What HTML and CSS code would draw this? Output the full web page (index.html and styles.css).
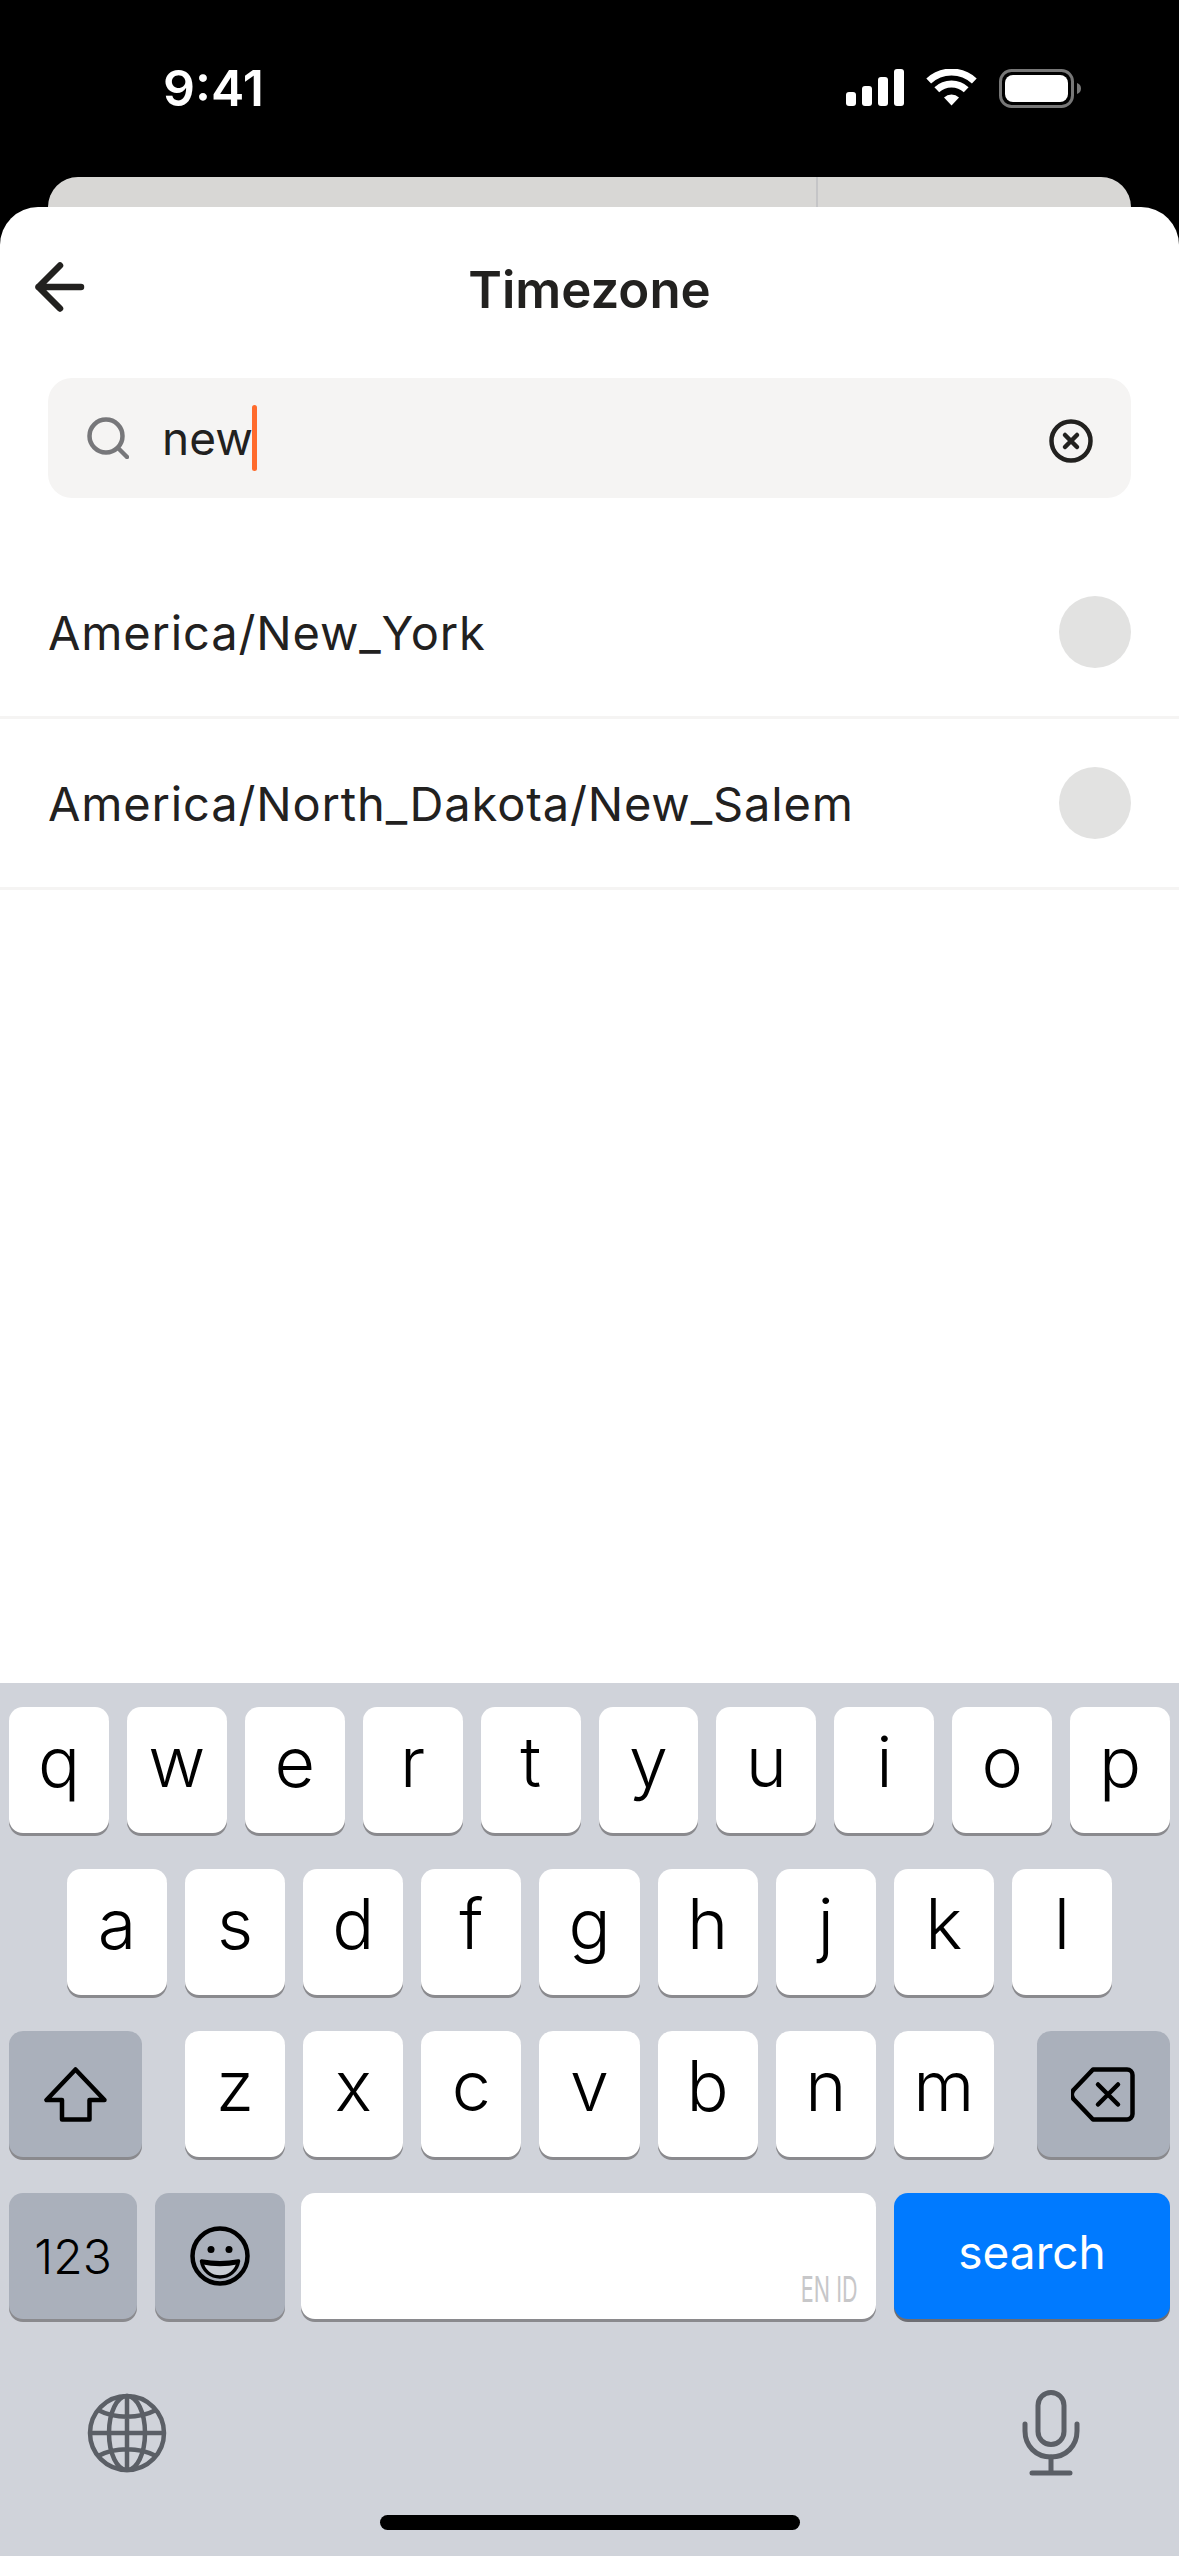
FILE: index.html
```html
<!DOCTYPE html>
<html lang="en">
  <head>
    <meta charset="UTF-8" />
    <meta name="viewport" content="width=device-width, initial-scale=1.0" />
    <title>Timezone</title>
    <link rel="stylesheet" href="styles.css">
  </head>
  <body>
    <div class="status-bar">
      <span class="time">9:41</span>
      <div class="status-icons">
        <svg class="signal" width="58" height="37" viewBox="0 0 58 37" fill="#fff">
          <rect x="0" y="23" width="10" height="14" rx="3"/>
          <rect x="16" y="17" width="10" height="20" rx="3"/>
          <rect x="32" y="8" width="10" height="29" rx="3"/>
          <rect x="48" y="0" width="10" height="37" rx="3"/>
        </svg>
        <svg class="wifi" width="51" height="37" viewBox="0 0 51 37" fill="none" stroke="#fff" stroke-width="7">
          <path d="M2.7 12A33.5 33.5 0 0 1 48.3 12"/>
          <path d="M10.8 20.8A21.5 21.5 0 0 1 40.2 20.8"/>
          <path d="M25.5 36.5L18 28.5A11 11 0 0 1 33 28.5Z" fill="#fff" stroke="none"/>
        </svg>
        <svg class="battery" width="82" height="39" viewBox="0 0 82 39">
          <rect x="1.5" y="1.5" width="72" height="36" rx="11" fill="none" stroke="#777" stroke-width="3"/>
          <rect x="6" y="6" width="63" height="27" rx="8" fill="#fff"/>
          <path d="M78 14C81 15 82 17 82 19.5C82 22 81 24 78 25Z" fill="#777"/>
        </svg>
      </div>
    </div>

    <div class="back-card">
      <div class="back-card-left"></div>
      <div class="back-card-right"></div>
    </div>

    <div class="sheet">
      <div class="sheet-header">
        <svg class="back-arrow" width="50" height="52" viewBox="0 0 50 52" fill="none" stroke="#22211f" stroke-width="6.5" stroke-linecap="round" stroke-linejoin="round">
          <path d="M46 26H3.500M25 4.500L3.500 26L25 47.500"/>
        </svg>
        <h2>Timezone</h2>
      </div>

      <div class="search-box">
        <svg class="search-icon" width="42" height="42" viewBox="0 0 42 42" fill="none" stroke="#77777a" stroke-width="4.500" stroke-linecap="round">
          <circle cx="19" cy="19" r="16.500"/>
          <path d="M32 32L40 40"/>
        </svg>
        <span class="search-text">new</span>
        <span class="caret"></span>
        <svg class="clear-icon" width="44" height="44" viewBox="0 0 44 44" fill="none" stroke="#22211f" stroke-width="4.500" stroke-linecap="round">
          <circle cx="22" cy="22" r="19.500"/>
          <path d="M16 16L28 28M28 16L16 28"/>
        </svg>
      </div>

      <div class="tz-list">
        <div class="tz-row">
          <span>America/New_York</span>
          <span class="radio"></span>
        </div>
        <div class="tz-row">
          <span>America/North_Dakota/New_Salem</span>
          <span class="radio"></span>
        </div>
      </div>
    </div>

    <div class="keyboard">
      <div class="kb-row kb-row-1">
        <div class="key">q</div>
        <div class="key">w</div>
        <div class="key">e</div>
        <div class="key">r</div>
        <div class="key">t</div>
        <div class="key">y</div>
        <div class="key">u</div>
        <div class="key">i</div>
        <div class="key">o</div>
        <div class="key">p</div>
      </div>
      <div class="kb-row kb-row-2">
        <div class="key">a</div>
        <div class="key">s</div>
        <div class="key">d</div>
        <div class="key">f</div>
        <div class="key">g</div>
        <div class="key">h</div>
        <div class="key">j</div>
        <div class="key">k</div>
        <div class="key">l</div>
      </div>
      <div class="kb-row kb-row-3">
        <div class="key key-dark key-shift">
          <svg width="63" height="55" viewBox="0 0 63 55" fill="none" stroke="#000" stroke-width="4.500" stroke-linejoin="round">
            <path d="M31.500 2.500L2.500 33H18V52.500H45.500V33H60.500Z"/>
          </svg>
        </div>
        <div class="key">z</div>
        <div class="key">x</div>
        <div class="key">c</div>
        <div class="key">v</div>
        <div class="key">b</div>
        <div class="key">n</div>
        <div class="key">m</div>
        <div class="key key-dark key-delete">
          <svg width="64" height="55" viewBox="0 0 64 55" fill="none" stroke="#000" stroke-width="4.500" stroke-linejoin="round" stroke-linecap="round">
            <path d="M22 2.500H56A5.500 5.500 0 0 1 61.500 8V47A5.500 5.500 0 0 1 56 52.500H22L2.500 32Q-1 27.500 2.500 23Z"/>
            <path d="M27 17.500L47 37.500M47 17.500L27 37.500"/>
          </svg>
        </div>
      </div>
      <div class="kb-row kb-row-4">
        <div class="key key-dark key-num">123</div>
        <div class="key key-dark key-emoji">
          <svg width="60" height="60" viewBox="0 0 60 60" fill="none" stroke="#000" stroke-width="4.500">
            <circle cx="30" cy="30" r="27.500"/>
            <circle cx="21" cy="23.500" r="3.500" fill="#000" stroke="none"/>
            <circle cx="39" cy="23.500" r="3.500" fill="#000" stroke="none"/>
            <path d="M11.500 35C24 37.500 36 37.500 48.500 35C47 45 39 51 30 51C21 51 13 45 11.500 35Z" fill="#c9cdd4" stroke-width="3.500" stroke-linejoin="round"/>
            <path d="M12 36.500C24 39 36 39 48 36.500" stroke-width="3.500"/>
          </svg>
        </div>
        <div class="key key-space"><span class="lang-label">EN ID</span></div>
        <div class="key key-search">search</div>
      </div>
      <div class="kb-bottom">
        <svg class="globe" width="80" height="80" viewBox="0 0 80 80" fill="none" stroke="#5b5f66" stroke-width="4.500">
          <circle cx="40" cy="40" r="37"/>
          <ellipse cx="40" cy="40" rx="18" ry="37"/>
          <path d="M40 3V77M3 40H77M11 17C28 26 52 26 69 17M11 63C28 54 52 54 69 63"/>
        </svg>
        <svg class="mic" width="58" height="86" viewBox="0 0 58 86" fill="none" stroke="#5b5f66" stroke-width="5" stroke-linecap="round">
          <rect x="16" y="2.500" width="26" height="52" rx="13"/>
          <path d="M3 34V41C3 56 14 67 29 67C44 67 55 56 55 41V34"/>
          <path d="M29 67V82M10 83H48"/>
        </svg>
      </div>
      <div class="home-indicator"></div>
    </div>
  </body>
</html>
```

FILE: styles.css
```css
* {
  box-sizing: border-box;
}

body {
  display: flex;
  flex-direction: column;
  width: 1179px;
  height: 2556px;
  margin: 0;
  overflow: hidden;
  font-family: Inter, "Noto Sans", sans-serif;
  color: #22211f;
  background-color: #000;
}

/* Status bar */
.status-bar {
  display: flex;
  justify-content: space-between;
  height: 177px;
  padding: 61px 98px 0 163px;
  color: #fff;
}

.time {
  font-size: 50px;
  font-weight: 600;
  line-height: 54px;
}

.status-icons {
  display: flex;
  align-items: flex-start;
  gap: 22px;
  padding-top: 8px;
}

/* The card peeking out behind the sheet */
.back-card {
  display: flex;
  height: 30px;
  margin: 0 48px;
  overflow: hidden;
  background: #d8d7d5;
  border-radius: 30px 30px 0 0;
}

.back-card-left {
  width: 770px;
  border-right: 2px solid #c5c5c7;
}

/* Sheet */
.sheet {
  flex: 1;
  min-height: 0;
  background: #fff;
  border-radius: 38px 38px 0 0;
}

.sheet-header {
  position: relative;
  display: flex;
  justify-content: center;
  align-items: center;
  height: 171px;
  padding-bottom: 6px;
}

.sheet-header h2 {
  margin: 0;
  font-size: 51px;
  font-weight: 600;
}

.back-arrow {
  position: absolute;
  top: 54px;
  left: 35px;
}

.search-box {
  display: flex;
  align-items: center;
  height: 120px;
  margin: 0 48px;
  padding: 0 38px 0 39px;
  background: #f5f4f3;
  border-radius: 24px;
}

.search-text {
  margin-left: 33px;
  font-size: 46px;
}

.caret {
  width: 5px;
  height: 66px;
  margin-left: -1px;
  background: #ff6b2c;
  border-radius: 3px;
}

.clear-icon {
  margin-top: 6px;
  margin-left: auto;
}

.tz-list {
  margin-top: 50px;
}

.tz-row {
  display: flex;
  justify-content: space-between;
  align-items: center;
  height: 171px;
  padding: 0 48px;
  font-size: 47px;
  letter-spacing: 0.85px;
  border-bottom: 3px solid #f5f4f3;
}

.radio {
  width: 72px;
  height: 72px;
  background: #e2e2e1;
  border-radius: 50%;
}

/* Keyboard */
.keyboard {
  display: flex;
  flex-direction: column;
  gap: 36px;
  height: 873px;
  padding-top: 24px;
  background: #d0d3da;
}

.kb-row {
  display: flex;
  gap: 18px;
  height: 126px;
}

.kb-row-1 {
  padding: 0 9px;
}

.kb-row-2 {
  padding: 0 67px;
}

.kb-row-3,
.kb-row-4 {
  padding: 0 9px;
}

.key {
  display: flex;
  flex: 1;
  justify-content: center;
  align-items: center;
  padding-bottom: 18px;
  font-size: 70px;
  font-weight: 350;
  color: #000;
  background: #fff;
  border-radius: 14px;
  box-shadow: 0 3px 0 #8a8a8e;
}

.key-dark {
  padding-bottom: 0;
  background: #aab0bb;
}

.key-shift {
  flex: none;
  width: 133px;
  margin-right: 25px;
}

.key-delete {
  flex: none;
  width: 133px;
  margin-left: 25px;
}

.key-num {
  flex: none;
  width: 128px;
  font-size: 48px;
}

.key-emoji {
  flex: none;
  width: 130px;
}

.key-space {
  flex: none;
  justify-content: flex-end;
  align-items: flex-end;
  width: 575px;
  margin-left: -2px;
  padding: 0 18px 12px 0;
}

.lang-label {
  font-size: 36px;
  line-height: 36px;
  font-weight: 400;
  color: #c7c7c9;
  transform: scaleX(0.6);
  transform-origin: right bottom;
  white-space: nowrap;
}

.key-search {
  flex: none;
  width: 276px;
  padding-bottom: 8px;
  font-size: 46px;
  font-weight: 400;
  color: #fff;
  background: #007aff;
  box-shadow: 0 3px 0 #6e6e73;
}

.kb-bottom {
  display: flex;
  justify-content: space-between;
  align-items: center;
  margin-top: 35px;
  padding: 0 99px 0 87px;
}

.home-indicator {
  width: 420px;
  height: 15px;
  margin: 3px auto 0;
  background: #000;
  border-radius: 8px;
}
```
